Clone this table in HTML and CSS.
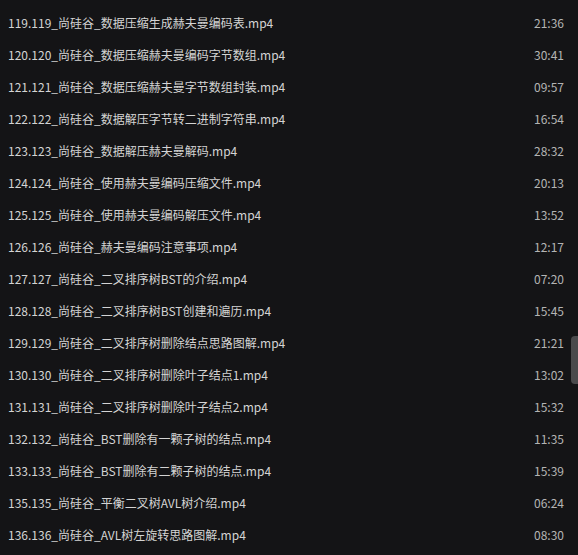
FILE: index.html
```html
<!DOCTYPE html>
<html lang="zh-CN">
<head>
  <meta charset="UTF-8">
  <meta name="viewport" content="width=device-width, initial-scale=1.0">
  <title>播放列表</title>
  <link rel="stylesheet" href="styles.css">
</head>
<body>
  <div class="playlist">
    <ul class="items">
      <li class="item"><span class="name">119.119_尚硅谷_数据压缩生成赫夫曼编码表.mp4</span><span class="time">21:36</span></li>
      <li class="item"><span class="name">120.120_尚硅谷_数据压缩赫夫曼编码字节数组.mp4</span><span class="time">30:41</span></li>
      <li class="item"><span class="name">121.121_尚硅谷_数据压缩赫夫曼字节数组封装.mp4</span><span class="time">09:57</span></li>
      <li class="item"><span class="name">122.122_尚硅谷_数据解压字节转二进制字符串.mp4</span><span class="time">16:54</span></li>
      <li class="item"><span class="name">123.123_尚硅谷_数据解压赫夫曼解码.mp4</span><span class="time">28:32</span></li>
      <li class="item"><span class="name">124.124_尚硅谷_使用赫夫曼编码压缩文件.mp4</span><span class="time">20:13</span></li>
      <li class="item"><span class="name">125.125_尚硅谷_使用赫夫曼编码解压文件.mp4</span><span class="time">13:52</span></li>
      <li class="item"><span class="name">126.126_尚硅谷_赫夫曼编码注意事项.mp4</span><span class="time">12:17</span></li>
      <li class="item"><span class="name">127.127_尚硅谷_二叉排序树BST的介绍.mp4</span><span class="time">07:20</span></li>
      <li class="item"><span class="name">128.128_尚硅谷_二叉排序树BST创建和遍历.mp4</span><span class="time">15:45</span></li>
      <li class="item"><span class="name">129.129_尚硅谷_二叉排序树删除结点思路图解.mp4</span><span class="time">21:21</span></li>
      <li class="item"><span class="name">130.130_尚硅谷_二叉排序树删除叶子结点1.mp4</span><span class="time">13:02</span></li>
      <li class="item"><span class="name">131.131_尚硅谷_二叉排序树删除叶子结点2.mp4</span><span class="time">15:32</span></li>
      <li class="item"><span class="name">132.132_尚硅谷_BST删除有一颗子树的结点.mp4</span><span class="time">11:35</span></li>
      <li class="item"><span class="name">133.133_尚硅谷_BST删除有二颗子树的结点.mp4</span><span class="time">15:39</span></li>
      <li class="item"><span class="name">135.135_尚硅谷_平衡二叉树AVL树介绍.mp4</span><span class="time">06:24</span></li>
      <li class="item"><span class="name">136.136_尚硅谷_AVL树左旋转思路图解.mp4</span><span class="time">08:30</span></li>
    </ul>
    <div class="scroll-thumb"></div>
  </div>
</body>
</html>
```

FILE: styles.css
```css
body {
  margin: 0;
  padding: 0;
  background: #141416;
  font-family: "Noto Sans CJK SC", "Noto Sans", sans-serif;
  overflow: hidden;
}

.playlist {
  position: relative;
  height: 555px;
  overflow: hidden;
}

.items {
  list-style: none;
  margin: 0;
  padding: 6px 14px 0 8px;
}

.item {
  display: flex;
  justify-content: space-between;
  align-items: center;
  height: 32px;
  font-size: 12px;
}

.name {
  color: #d4d4d4;
  white-space: nowrap;
}

.time {
  color: #b4b4b4;
}

/* scrollbar thumb */
.scroll-thumb {
  position: absolute;
  right: 0;
  top: 336px;
  width: 7px;
  height: 48px;
  background: #4a4a4c;
  border-radius: 4px 0 0 4px;
}
```
